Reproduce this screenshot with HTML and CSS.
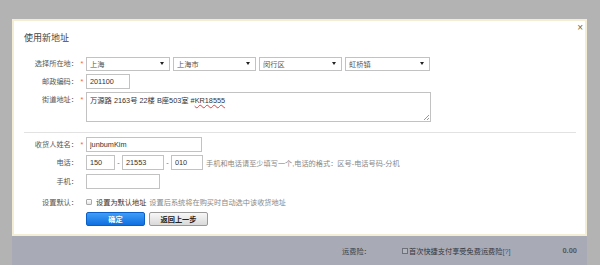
FILE: index.html
```html
<!DOCTYPE html>
<html lang="zh-CN">
<head>
    <meta charset="UTF-8">
    <title>使用新地址</title>
    <link rel="stylesheet" href="styles.css">
</head>
<body>

    <div class="screen">
        <!-- New address dialog -->
        <div class="dialog">
            <a href="#" class="close">×</a>
            <h2 class="dialog-title">使用新地址</h2>

            <div class="form">
                <div class="row row-region">
                    <span class="label">选择所在地：</span><span class="star">*</span>
                    <div class="select select-1"><span>上海</span><i class="arrow"></i></div>
                    <div class="select select-2"><span>上海市</span><i class="arrow"></i></div>
                    <div class="select select-3"><span>闵行区</span><i class="arrow"></i></div>
                    <div class="select select-4"><span>虹桥镇</span><i class="arrow"></i></div>
                </div>
                <div class="row row-zip">
                    <span class="label">邮政编码：</span><span class="star">*</span>
                    <input type="text" class="field zip" value="201100">
                </div>
                <div class="row row-street">
                    <span class="label">街道地址：</span><span class="star">*</span>
                    <div class="field textarea">万源路 2163号 22楼 B座503室 #<span class="typo">KR18555</span></div>
                </div>

                <div class="divider"></div>

                <div class="row row-name">
                    <span class="label">收货人姓名：</span><span class="star">*</span>
                    <input type="text" class="field name" value="junbumKim">
                </div>
                <div class="row row-phone">
                    <span class="label">电话：</span><span class="star"></span>
                    <input type="text" class="field phone-area" value="150">
                    <span class="dash">-</span>
                    <input type="text" class="field phone-num" value="21553">
                    <span class="dash">-</span>
                    <input type="text" class="field phone-ext" value="010">
                    <span class="hint">手机和电话请至少填写一个,电话的格式：区号-电话号码-分机</span>
                </div>
                <div class="row row-mobile">
                    <span class="label">手机：</span><span class="star"></span>
                    <input type="text" class="field mobile" value="">
                </div>
                <div class="row row-default">
                    <span class="label">设置默认：</span><span class="star"></span>
                    <span class="check"></span>
                    <span class="default-text">设置为默认地址</span>
                    <span class="hint">设置后系统将在购买时自动选中该收货地址</span>
                </div>
                <div class="row row-buttons">
                    <span class="label"></span><span class="star"></span>
                    <button class="btn btn-primary">确定</button>
                    <button class="btn btn-back">返回上一步</button>
                </div>
            </div>
        </div>

        <!-- Page content under the mask -->
        <div class="under">
            <span class="under-label">运费险：</span>
            <span class="under-check"></span>
            <span class="under-text">首次快捷支付享受免费运费险<a href="#" class="help">[?]</a></span>
            <span class="under-amount">0.00</span>
        </div>
    </div>

</body>
</html>
```

FILE: styles.css
```css
/* Basic reset */
* {
    margin: 0;
    padding: 0;
    box-sizing: border-box;
}

body {
    background: #b3b3b3;
    font-family: "Liberation Sans", "Noto Sans CJK SC", sans-serif;
    font-size: 7.2px;
    color: #555;
    overflow: hidden;
}

.screen {
    padding: 19px 0 0 12px;
}

/* Dialog box */
.dialog {
    position: relative;
    width: 575px;
    height: 217px;
    background: #fff;
    border: 2px solid #f4edd6;
    padding: 11px 9px 9px 10px;
}

.close {
    position: absolute;
    top: 2px;
    right: 2px;
    font-size: 10px;
    line-height: 10px;
    color: #666;
    text-decoration: none;
}

.dialog-title {
    font-size: 9px;
    line-height: 12px;
    font-weight: normal;
    color: #444;
}

.form {
    margin-top: 12px;
}

.row {
    display: flex;
    align-items: center;
}

.row-zip { margin-top: 3px; }
.row-street { margin-top: 3px; align-items: flex-start; }
.row-name { margin-top: 4px; }
.row-phone { margin-top: 3px; }
.row-mobile { margin-top: 4px; }
.row-default { margin-top: 5px; height: 16px; }
.row-buttons { margin-top: 2px; }

.label {
    flex: none;
    width: 54px;
    text-align: right;
    line-height: 15px;
    color: #555;
}

.star {
    flex: none;
    width: 8px;
    text-align: center;
    line-height: 15px;
    color: #f60;
}

/* Inputs */
.field {
    height: 15px;
    border: 1px solid #c2c2c2;
    padding: 0 3px;
    font-family: inherit;
    font-size: 7.3px;
    color: #333;
    background: #fff;
    outline: none;
}

.zip { width: 44px; }
.name { width: 116px; }
.mobile { width: 74px; }
.phone-area { width: 29px; }
.phone-num { width: 42px; }
.phone-ext { width: 32px; }

.textarea {
    position: relative;
    width: 345px;
    height: 30px;
    padding: 2px 3px;
    line-height: 11px;
}

/* resize grip */
.textarea::after {
    content: "";
    position: absolute;
    right: 1px;
    bottom: 1px;
    width: 5px;
    height: 5px;
    background: linear-gradient(135deg, transparent 45%, #999 45%, #999 55%, transparent 55%, transparent 75%, #999 75%, #999 85%, transparent 85%);
}

.typo {
    text-decoration: underline wavy #e04040;
    text-decoration-thickness: 0.6px;
}

/* Fake select boxes */
.select {
    display: flex;
    align-items: center;
    justify-content: space-between;
    height: 14px;
    border: 1px solid #c2c2c2;
    padding: 0 5px 0 3px;
    margin-right: 3px;
    color: #555;
}

.select-1 { width: 84px; }
.select-2 { width: 83px; }
.select-3 { width: 83px; }
.select-4 { width: 85px; }

.arrow {
    width: 0;
    height: 0;
    border-left: 2px solid transparent;
    border-right: 2px solid transparent;
    border-top: 3px solid #222;
}

.divider {
    height: 1px;
    background: #e2e2e2;
    margin-top: 10px;
}

.dash {
    width: 7px;
    text-align: center;
    color: #666;
}

.hint {
    margin-left: 3px;
    color: #888;
}

.check {
    width: 6px;
    height: 6px;
    border: 1px solid #aaa;
    border-radius: 1px;
    background: linear-gradient(#fff, #e4e4e4);
    margin-right: 4px;
}

.default-text {
    color: #333;
}

/* Buttons */
.btn {
    width: 59px;
    height: 14px;
    border-radius: 2px;
    font-family: inherit;
    font-size: 7.2px;
    font-weight: bold;
    cursor: pointer;
}

.btn-primary {
    background: linear-gradient(#3f9ef7, #0f6fe0);
    border: 1px solid #0b5fc4;
    color: #fff;
}

.btn-back {
    margin-left: 4px;
    background: linear-gradient(#f7f7f7, #d9d9d9);
    border: 1px solid #9a9a9a;
    color: #222;
}

/* Dimmed page content below the dialog */
.under {
    display: flex;
    align-items: center;
    width: 575px;
    height: 29px;
    background: #a8abb6;
    padding: 0 10px 0 330px;
    color: #3b3d45;
}

.under-label {
    width: 60px;
}

.under-check {
    width: 6px;
    height: 6px;
    border: 1px solid #6f717a;
    background: #b4b6c0;
    margin-right: 1px;
}

.under-text {
    color: #33353c;
}

.help {
    color: #3650a8;
    text-decoration: none;
}

.under-amount {
    margin-left: auto;
    font-size: 7.5px;
    font-weight: bold;
    color: #55575e;
}
```
